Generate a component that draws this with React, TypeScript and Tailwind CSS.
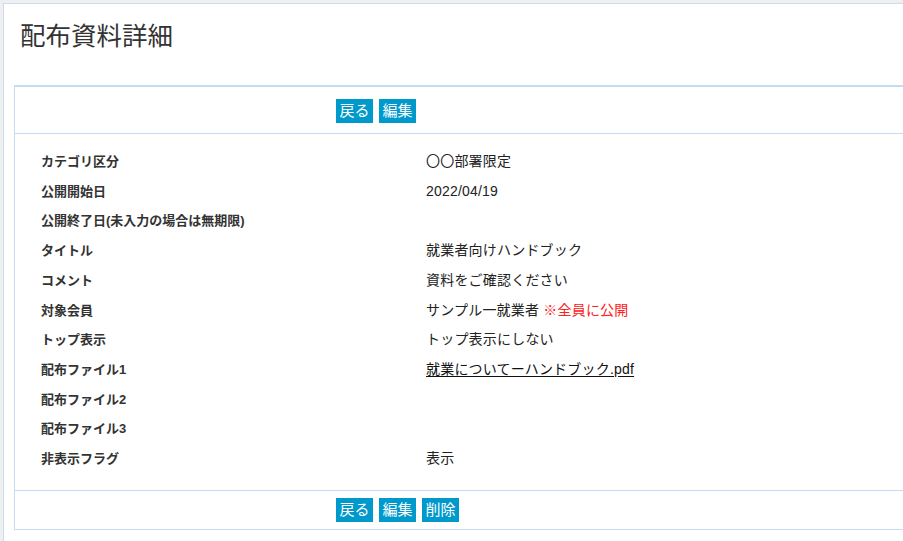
const rows: { label: string; value?: React.ReactNode }[] = [
  { label: "カテゴリ区分", value: "〇〇部署限定" },
  { label: "公開開始日", value: "2022/04/19" },
  { label: "公開終了日(未入力の場合は無期限)" },
  { label: "タイトル", value: "就業者向けハンドブック" },
  { label: "コメント", value: "資料をご確認ください" },
  {
    label: "対象会員",
    value: (
      <>
        サンプル一就業者 <span className="text-[#ff2020]">※全員に公開</span>
      </>
    ),
  },
  { label: "トップ表示", value: "トップ表示にしない" },
  {
    label: "配布ファイル1",
    value: (
      <a href="#" className="underline underline-offset-2 text-[#111]">
        就業についてーハンドブック.pdf
      </a>
    ),
  },
  { label: "配布ファイル2" },
  { label: "配布ファイル3" },
  { label: "非表示フラグ", value: "表示" },
];

const Btn = ({ children }: { children: React.ReactNode }) => (
  <button className="h-[24px] w-[37px] bg-[#0099cc] text-white text-[15px] leading-[24px] text-center">
    {children}
  </button>
);

export default function App() {
  return (
    <div
      className="w-[903px] h-[541px] overflow-hidden bg-[#efefef] pt-[3px] pl-[3px]"
      style={{ fontFamily: '"Liberation Sans", "Noto Sans CJK JP", sans-serif' }}
    >
      <div className="w-[1000px] h-[600px] bg-white border border-[#c6ddf2]">
        {/* Title */}
        <h1 className="pl-[16px] pt-[15px] h-[81px] text-[25.5px] leading-[34px] text-[#333] font-normal">
          配布資料詳細
        </h1>

        {/* Detail box */}
        <div className="ml-[10px] border-l border-b border-t-2 border-[#c2dcf4]">
          <div className="flex gap-[6px] pl-[321px] pt-[12px] pb-[10px] border-b border-[#c2dcf4]">
            <Btn>戻る</Btn>
            <Btn>編集</Btn>
          </div>

          <div className="pt-[13px] pb-[16px] border-b border-[#c2dcf4]">
            {rows.map((r) => (
              <div key={r.label} className="flex items-center h-[29.7px]">
                <div className="w-[411px] pl-[26px] text-[13px] font-bold text-[#333]">
                  {r.label}
                </div>
                <div className="text-[14px] text-[#222] tracking-[0.2px]">{r.value}</div>
              </div>
            ))}
          </div>

          <div className="flex gap-[6px] pl-[321px] pt-[7px] pb-[7px]">
            <Btn>戻る</Btn>
            <Btn>編集</Btn>
            <Btn>削除</Btn>
          </div>
        </div>
      </div>
    </div>
  );
}
